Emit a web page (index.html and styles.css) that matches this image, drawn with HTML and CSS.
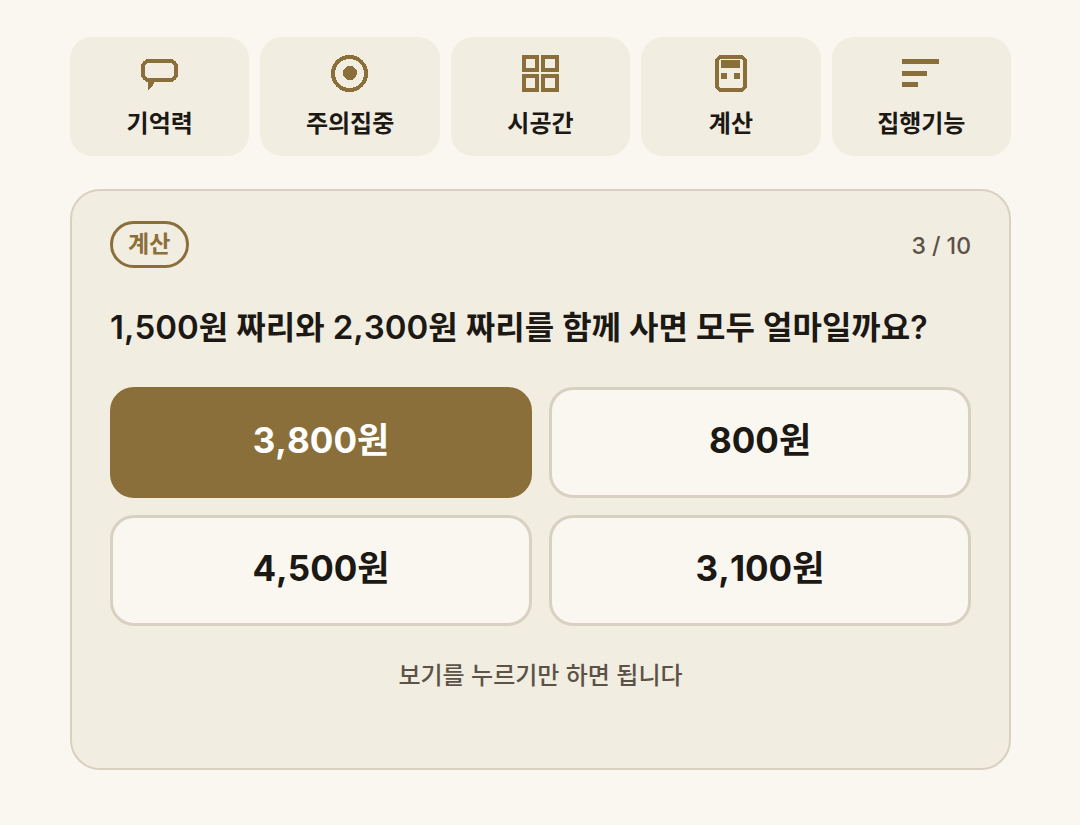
FILE: index.html
```html
<!DOCTYPE html>
<html lang="ko">
<head>
  <meta charset="UTF-8">
  <meta name="viewport" content="width=device-width, initial-scale=1.0">
  <title>계산</title>
  <link rel="stylesheet" href="styles.css">
</head>

<body>
  <main class="page">
    <nav class="tabs">
      <button type="button" class="tab">
        <svg class="icon" viewBox="0 0 38 37" aria-hidden="true">
          <rect class="line" x="2" y="6" width="33" height="19" rx="6"/>
          <path class="solid" d="M7 26h7l-2 4-4 5H7z"/>
        </svg>
        <span>기억력</span>
      </button>
      <button type="button" class="tab">
        <svg class="icon" viewBox="0 0 38 37" aria-hidden="true">
          <circle class="line" cx="18.5" cy="18.5" r="16.5"/>
          <circle class="solid" cx="19" cy="18" r="7"/>
        </svg>
        <span>주의집중</span>
      </button>
      <button type="button" class="tab">
        <svg class="icon" viewBox="0 0 38 37" aria-hidden="true">
          <path class="line" d="M3 2h13v13H3zM22 2h14v13H22zM3 21h13v14H3zM22 21h14v14H22z"/>
        </svg>
        <span>시공간</span>
      </button>
      <button type="button" class="tab">
        <svg class="icon" viewBox="0 0 38 37" aria-hidden="true">
          <path class="line" d="M8 2h22l3 3v27l-3 3H8l-3-3V5z"/>
          <path class="solid" d="M9 5h19v8H9zM9 18h6v6H9zM22 18h6v6h-6z"/>
        </svg>
        <span>계산</span>
      </button>
      <button type="button" class="tab">
        <svg class="icon" viewBox="0 0 38 37" aria-hidden="true">
          <path class="solid" d="M0 4h37v5H0zM0 16h25v5H0zM0 27h16v5H0z"/>
        </svg>
        <span>집행기능</span>
      </button>
    </nav>

    <section class="card">
      <div class="card-head">
        <span class="badge">계산</span>
        <span class="progress">3 / 10</span>
      </div>

      <h1 class="question"><span class="amount">1,500</span>원 짜리와 <span class="amount">2,300</span>원 짜리를 함께 사면 모두 얼마일까요?</h1>

      <div class="options">
        <button type="button" class="option selected">3,800원</button>
        <button type="button" class="option">800원</button>
        <button type="button" class="option">4,500원</button>
        <button type="button" class="option">3,100원</button>
      </div>

      <p class="hint">보기를 누르기만 하면 됩니다</p>
    </section>
  </main>
</body>
</html>
```
FILE: styles.css
```css
* {
  box-sizing: border-box;
}

body {
  margin: 0;
  background-color: #faf7f0;
  color: #1c1814;
  font-family: Inter, "Noto Sans CJK KR", sans-serif;
  font-kerning: none;
}

button {
  font-family: inherit;
  font-kerning: inherit;
  color: inherit;
  cursor: pointer;
}

.page {
  padding: 37px 69px 55px 70px;
}

.tabs {
  display: grid;
  grid-template-columns: repeat(5, 1fr);
  gap: 11px;
}

.tab {
  display: flex;
  flex-direction: column;
  align-items: center;
  gap: 13px;
  padding: 18px 0 14px;
  border: none;
  border-radius: 22px;
  background-color: #f1ede1;
  font-size: 24px;
  font-weight: 600;
  line-height: 37px;
}

.icon {
  width: 38px;
  height: 37px;
  shape-rendering: crispEdges;
}

.line {
  fill: none;
  stroke: #8b6f3a;
  stroke-width: 4;
}

.solid {
  fill: #8b6f3a;
}

.card {
  margin-top: 33px;
  padding: 30px 38px 74px;
  border: 2px solid #d8d1c1;
  border-radius: 30px;
  background-color: #f1ede1;
}

.card-head {
  display: flex;
  justify-content: space-between;
  align-items: center;
}

.badge {
  padding: 0 16px 0 15px;
  border: 3px solid #8b6f3a;
  border-radius: 24px;
  color: #8b6f3a;
  font-size: 23px;
  font-weight: 600;
  line-height: 41px;
}

.progress {
  padding-top: 2px;
  color: #5c5248;
  font-size: 23px;
  font-weight: 500;
}

.question {
  margin: 36px 0 35px;
  font-size: 32px;
  font-weight: 600;
  line-height: 48px;
}

.amount {
  font-size: 33px;
  line-height: 1;
}

.options {
  display: grid;
  grid-template-columns: 1fr 1fr;
  gap: 17px;
}

.option {
  padding: 0 0 4px;
  border: 3px solid #d8d1c1;
  border-radius: 24px;
  background-color: #faf7f0;
  font-size: 35px;
  font-weight: 700;
  line-height: 101px;
}

.option.selected {
  border-color: #8b6f3a;
  background-color: #8b6f3a;
  color: #fff;
}

.hint {
  margin: 32px 0 0;
  color: #5c5248;
  font-size: 24px;
  font-weight: 500;
  line-height: 36px;
  text-align: center;
}
```
